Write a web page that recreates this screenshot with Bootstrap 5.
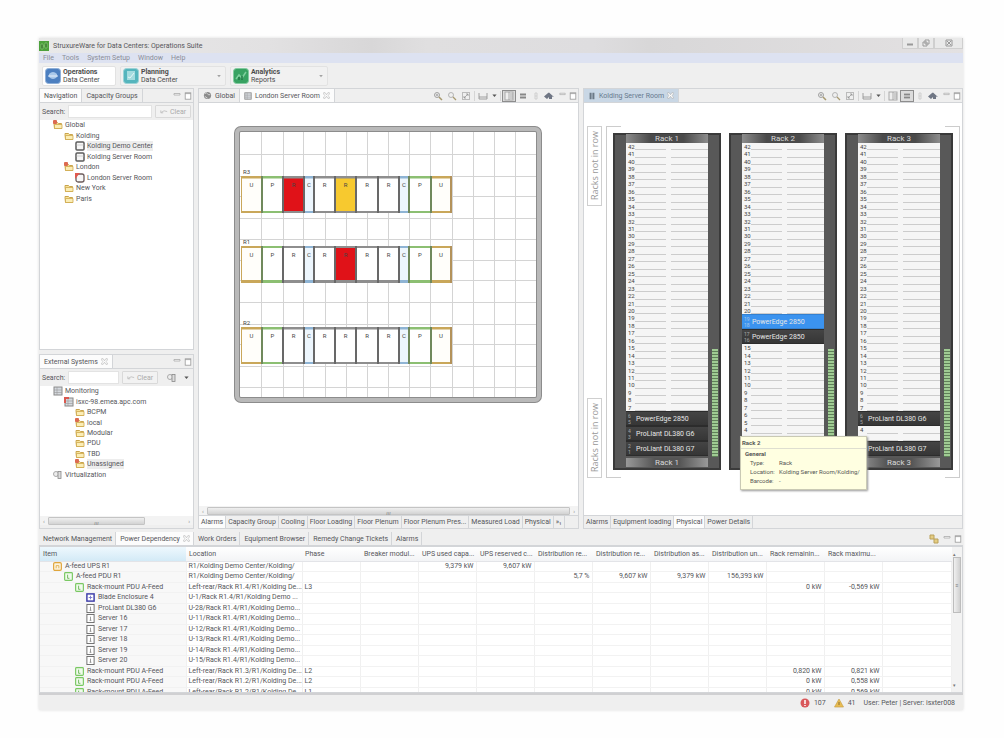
<!DOCTYPE html>
<html lang="en">
<head>
<meta charset="utf-8">
<meta name="viewport" content="width=device-width, initial-scale=1">
<title>StruxureWare for Data Centers: Operations Suite</title>
<link href="https://cdn.jsdelivr.net/npm/bootstrap@5.3.0/dist/css/bootstrap.min.css" rel="stylesheet">
<style>
  :root { --line: #d3d5d8; --chrome: #efefef; --ink: #55565a; }
  body { font: 7px/10px Roboto, "Open Sans", sans-serif; color: var(--ink); background: #fefefe; padding: 38px 41px 28px 39px; min-height: 100vh; }
  svg { display: block; flex: none; }
  button, input { font: inherit; color: inherit; }
  a { color: inherit; text-decoration: none; }
  .app-window { background: var(--chrome); box-shadow: 0 0 3px #ddd; }
  .ico { width: 10px; height: 10px; }
  .title-strip { height: 15px; background: linear-gradient(90deg, #e9e9e9, #e2e1e2 25%, #d8d7d8 36%, #e0dfe0 42%, #dedddf 60%, #d8d7d8 66%, #e3e1e2 100%); }
  .win-btn { border: 1px solid #cfcfcf; border-top: 0; background: #e9e9e9; height: 11px; width: 16px; padding: 0; display: grid; place-items: center; }
  .win-btn.wide { width: 29px; }
  .menu-strip { height: 10px; background: #dde2f1; color: #8a8d98; gap: 8px; padding-left: 4px; }
  .mode-strip { height: 25px; gap: 4px; padding: 2px 3px; }
  .mode-btn { height: 20px; border: 1px solid #e2e2e2; background: #f1f1f1; border-radius: 2px; padding: 0 3px 0 2px; line-height: 8px; text-align: left; gap: 2px; color: #4c4c4c; }
  .mode-btn.on { background: #fff; }
  .w-ops { width: 74px; } .w-plan { width: 106px; } .w-ana { width: 98px; }
  .bench { display: grid; grid-template-columns: minmax(0,155fr) minmax(0,381fr) minmax(0,380fr); gap: 4px; margin-bottom: 3px; }
  .pane { border: 1px solid var(--line); min-width: 0; }
  .tabs { height: 14px; background: var(--chrome); border-bottom: 1px solid var(--line); flex: none; white-space: nowrap; }
  .tab-btn { border: 0; border-right: 1px solid var(--line); background: transparent; height: 13px; padding: 0 4px; display: flex; align-items: center; gap: 3px; white-space: nowrap; }
  .tab-btn.on { background: #fcfcfc; }
  .tab-btn.focused { background: #c9d7e5; color: #66798e; }
  .dock .tab-btn { padding: 0 3px 0 4px; }
  .pane-tools { margin-left: auto; display: flex; align-items: center; padding-right: 1px; }
  .tool { border: 0; background: transparent; padding: 0; width: 14px; height: 12px; display: grid; place-items: center; color: #8e8e8e; }
  .tool.slim { width: 9px; }
  .tool.mid { width: 12px; }
  .tool.down { background: #dcdcdc; box-shadow: inset 0 0 0 1px #8d8d8d; }
  .rule { width: 1px; height: 10px; background: #d5d5d5; margin: 0 1px; }
  .find { height: 17px; padding: 2px 2px 2px 2px; gap: 3px; }
  .find input { border: 1px solid #e3e3e3; background: #fff; height: 13px; min-width: 0; flex: 1; padding: 0 2px; }
  .find .clear-btn { border: 1px solid #d9d9d9; background: #f2f2f2; color: #aaa; height: 13px; width: 36px; padding: 0; border-radius: 1px; gap: 2px; }
  .tree { display: grid; grid-auto-rows: 1fr; list-style: none; margin: 0; padding: 0 0 0 13px; }
  .tree.nav-tree { height: 84px; }
  .tree.ext-tree { height: 94px; margin-bottom: 36px; }
  .tree li { display: flex; align-items: center; gap: 2px; min-height: 0; white-space: nowrap; }
  .tree .d1 { padding-left: 11px; } .tree .d2 { padding-left: 22px; }
  .tree .chosen span { background: #ededed; }
  .bar { height: 9px; background: #f3f3f3; gap: 3px; padding: 0 3px; color: #888; flex: none; font-size: 6px; }
  .bar i { height: 8px; border: 1px solid #c4c4c4; background: linear-gradient(#efefef, #d3d3d3); border-radius: 1px; display: grid; place-items: center; }
  .ext-bar { margin-bottom: 3px; }
  .foot-tabs { height: 13px; border-top: 1px solid var(--line); background: var(--chrome); flex: none; overflow: hidden; }
  .foot-tabs .tab-btn { height: 12px; padding: 0 2px; }
  .floor-area { padding: 23px 0 0 35px; }
  .plan text { font-size: 6px; fill: #444; }
  .rack-area { padding: 23px 2px 37px 3px; }
  .vert { writing-mode: vertical-rl; transform: rotate(180deg); width: 15px; height: 80px; border: 1px solid #cfcfcf; font: 9px/13px "Open Sans", sans-serif; color: #999; text-align: center; white-space: nowrap; }
  .row-frame { border-left: 1px solid #ccc; border-right: 1px solid #ccc; padding: 7px 6px 8px; gap: 8px; background: linear-gradient(#ccc,#ccc) 0 0/14px 1px, linear-gradient(#ccc,#ccc) 100% 0/14px 1px, linear-gradient(#ccc,#ccc) 0 100%/14px 1px, linear-gradient(#ccc,#ccc) 100% 100%/14px 1px; background-repeat: no-repeat; }
  .rack { flex: 1; min-width: 0; display: grid; grid-template: 9px minmax(0,1fr) 13px / 13px minmax(0,1fr) 13px; background: #585858; box-shadow: inset 0 0 0 2px #3a3a3a; }
  .rack h2 { grid-column: 2; margin: 1px 0; font-size: 8px; line-height: 9px; height: 9px; font-weight: 400; text-align: center; color: #d8d8d8; background: linear-gradient(90deg, #8c8c8c, #4a4a4a 30%, #4a4a4a 70%, #8c8c8c); overflow: hidden; }
  .rack .foot { background: linear-gradient(90deg, #999, #555 35%, #555 65%, #999); }
  .bays { grid-column: 2; margin: 1px 0; display: grid; grid-template-rows: repeat(42, minmax(0,1fr)); background: #f5f5f5; }
  .slot { font-size: 6px; line-height: 7px; padding-left: 2px; color: #444; background: linear-gradient(#ccc,#ccc) 9px 100%/31px 1px no-repeat, linear-gradient(#ccc,#ccc) 100% 100%/37px 1px no-repeat; overflow: hidden; }
  .unit { grid-row: span 2; background: linear-gradient(#444, #363636); border: 1px solid #2c2c2c; border-width: 1px 0; color: #e6e6e6; display: flex; align-items: center; gap: 3px; white-space: nowrap; overflow: hidden; }
  .unit small { font-size: 5px; line-height: 6px; width: 7px; padding-left: 2px; opacity: .6; }
  .unit.sel { background: #3b93ef; border-color: #3380d0; }
  .meter { width: 6px; height: 108px; align-self: end; justify-self: center; background: repeating-linear-gradient(#9fcb93 0 2px, #5f7f58 2px 3px); }
  .tip { left: 156px; top: 333px; width: 127px; background: #ffffe1; border: 1px solid #c9c9b4; box-shadow: 1px 1px 2px #999; color: #555; font-size: 6px; line-height: 9px; }
  .tip header { border-bottom: 1px solid #deded0; padding: 0 1px; line-height: 11px; height: 12px; font-weight: 700; }
  .tip dl { display: grid; grid-template-columns: 29px 1fr; margin: 0; padding: 0 0 4px 9px; }
  .tip dt { font-weight: 400; } .tip dd { margin: 0; white-space: nowrap; }
  .sheet { table-layout: fixed; width: 100%; height: 151px; border-collapse: collapse; }
  .sheet th { height: 14px; font-weight: 400; background: linear-gradient(#fff, #f3f4f6); border-bottom: 1px solid #e3e4e8; padding: 0 4px; white-space: nowrap; overflow: hidden; }
  .sheet th:nth-child(-n+3) { padding-left: 3px; }
  .sheet th:first-child { background: linear-gradient(#eef8fd, #d3eaf6); }
  .sheet td { padding: 0 2px; border-right: 1px solid #f0f0f0; border-bottom: 1px solid #f2f2f2; line-height: 9px; white-space: nowrap; overflow: hidden; }
  .sheet td:first-child { background: #f8f8f8; }
  .sheet td:nth-child(n+4) { text-align: right; }
  .cell { display: flex; align-items: center; gap: 3px; height: 9px; padding-left: 11px; }
  .cell.l1 { padding-left: 22px; } .cell.l2 { padding-left: 33px; } .cell.l3 { padding-left: 44px; }
  .cell .ico { width: 9px; height: 9px; }
  .c-item { width: 146px; } .c-loc { width: 116px; } .c-num { width: 58px; }
  .sheet-box { height: 147px; overflow: hidden; background: #fff; border: 1px solid var(--line); }
  .vbar { width: 10px; background: #f3f3f3; font-size: 5px; color: #777; padding: 2px 1px; flex: none; }
  .vbar i { width: 8px; height: 56px; margin-top: -2px; border: 1px solid #bdbdbd; background: linear-gradient(90deg, #f0f0f0, #d0d0d0); display: grid; place-items: center; }
  .status { height: 17px; padding-right: 8px; gap: 4px; border-top: 2px solid #d0d0d2; }
</style>
</head>
<body class="d-flex flex-column">
<svg width="0" height="0" class="position-absolute" aria-hidden="true">
  <symbol id="folder" viewBox="0 0 10 10"><path d="M1 3.500V2.500h3.500l1 1H8.500V8.500H1.500z" fill="#f6e29a" stroke="#c9a44c"/><path d="M1.500 4.500h7.500v4H1.500z" fill="#fbedb5" stroke="#cfa94e" stroke-width=".8"/></symbol>
  <symbol id="folder-alert" viewBox="0 0 10 10"><use href="#folder"/><rect x="0" y="0" width="4" height="4" rx="1" fill="#dc6a50"/></symbol>
  <symbol id="room" viewBox="0 0 10 10"><rect x="1" y="1" width="8" height="8" rx="1" fill="#f6f6f6" stroke="#5c5c5c" stroke-width="1.500"/><path d="M1 4h8" stroke="#bbb" stroke-width=".6"/></symbol>
  <symbol id="room-alert" viewBox="0 0 10 10"><rect x="1" y="1" width="8" height="8" rx="2" fill="#f6f6f6" stroke="#6c5c5c" stroke-width="1.300"/><path d="M0 0h5L0 6z" fill="#e0584e"/></symbol>
  <symbol id="monitor" viewBox="0 0 10 10"><rect x="1" y="1" width="8" height="8" fill="#d5d9de" stroke="#888"/><path d="M1 4h8M1 6.500h8M4 1v8" stroke="#999" stroke-width=".6"/></symbol>
  <symbol id="monitor-alert" viewBox="0 0 10 10"><use href="#monitor"/><path d="M0 0h5v2H2v4H0z" fill="#d8594f"/></symbol>
  <symbol id="virtual" viewBox="0 0 10 10"><circle cx="3" cy="4" r="2.500" fill="#eee" stroke="#aaa"/><rect x="5" y="1.500" width="3" height="7" fill="#ddd" stroke="#888" stroke-width=".8"/></symbol>
  <symbol id="zin" viewBox="0 0 10 10"><circle cx="4" cy="4" r="2.500" fill="none" stroke="currentColor" stroke-width=".8"/><path d="m6 6 3 3" stroke="#a89a70" stroke-width="1.500"/><path d="M2.800 4h2.400M4 2.800v2.400" stroke="currentColor" stroke-width=".7"/></symbol>
  <symbol id="zout" viewBox="0 0 10 10"><circle cx="4" cy="4" r="2.500" fill="none" stroke="currentColor" stroke-width=".6"/><path d="m6 6 3 3" stroke="#a89a70" stroke-width="1.300"/></symbol>
  <symbol id="fit" viewBox="0 0 10 10"><rect x="1.500" y="1.500" width="7" height="7" fill="none" stroke="#bbb"/><path d="m3 7 4-4M5 3h2v2M3 5v2h2" fill="none" stroke="currentColor" stroke-width=".7"/></symbol>
  <symbol id="screen" viewBox="0 0 10 10"><path d="M1 2v6h8V2M1 6h8" fill="none" stroke="currentColor" stroke-width=".8"/></symbol>
  <symbol id="caret" viewBox="0 0 10 10"><path d="M2 3.500h6L5 7z" fill="#555"/></symbol>
  <symbol id="split" viewBox="0 0 10 10"><rect x="1" y="1" width="8" height="8" fill="#eee" stroke="#aaa"/><path d="M5 1v8M6 3h3M6 5h3M6 7h3" stroke="#999" stroke-width=".8"/></symbol>
  <symbol id="lines" viewBox="0 0 10 10"><rect x="2" y="2" width="6" height="6" fill="#bbb"/><path d="M2 3.500h6M2 6.500h6" stroke="#888"/></symbol>
  <symbol id="faint" viewBox="0 0 10 10"><path d="M4 2h2v6H4zM4 5h2" fill="none" stroke="#cfcfcf"/></symbol>
  <symbol id="home" viewBox="0 0 10 10"><path d="M0 5.500 4 2l1-.5L10 6 8 5.500V8H5V6L3 8z" fill="#6f7684"/></symbol>
  <symbol id="mini" viewBox="0 0 10 10"><path d="M2 2.500h6v1.500H2z" fill="#fff" stroke="#aaa" stroke-width=".8"/></symbol>
  <symbol id="maxi" viewBox="0 0 10 10"><rect x="1.500" y="1" width="7" height="8" fill="#fff" stroke="#999"/><path d="M1.500 2h7" stroke="#999"/></symbol>
  <symbol id="close" viewBox="0 0 10 10"><path d="M1 1h2l2 3 2-3h2v2L7 5l2 2v2H7L5 6 3 9H1V7l2-2-2-2z" fill="#fff" stroke="#aaa" stroke-width=".8"/></symbol>
  <symbol id="undo" viewBox="0 0 10 10"><path d="M1 3v3h3M1.500 5.500Q5 2 9 4.500" fill="none" stroke="#bbb"/></symbol>
  <symbol id="globe" viewBox="0 0 10 10"><circle cx="5" cy="5" r="4" fill="#8b8b8b"/><path d="M2 3q2-2 3 0t3 1M2 6l3 2" stroke="#ddd" fill="none"/></symbol>
  <symbol id="rackico" viewBox="0 0 10 10"><path d="M2 1h2.500v8H2zM5.500 1H8v8H5.500z" fill="#6c7986"/></symbol>
  <symbol id="link" viewBox="0 0 10 10"><path d="M1 1h4v4H1zM5 5h4v4H5z" fill="#e5cd82" stroke="#b9a05a"/></symbol>
  <symbol id="gold" viewBox="0 0 10 10"><rect x=".7" y=".7" width="8.600" height="8.600" rx="1.500" fill="#fdf3dc" stroke="#e0a63c" stroke-width="1.300"/><path d="M3.500 7V4h3v3" fill="none" stroke="#e0b050"/></symbol>
  <symbol id="green" viewBox="0 0 10 10"><rect x=".7" y=".7" width="8.600" height="8.600" rx="1" fill="#f0fbec" stroke="#7ac863" stroke-width="1.300"/><path d="M4 3v4h2" fill="none" stroke="#69b156"/></symbol>
  <symbol id="blade" viewBox="0 0 10 10"><rect x="1" y="1" width="8" height="8" fill="#fff" stroke="#3b3ba8" stroke-width="1.600"/><path d="M5 3v4M3 5h4" stroke="#7777cc"/></symbol>
  <symbol id="server" viewBox="0 0 10 10"><rect x="1" y=".5" width="8" height="9" fill="#fff" stroke="#666"/><path d="M5 3v4M4 7h2" stroke="#777" stroke-width=".8"/></symbol>
</svg>

<main class="app-window d-flex flex-column flex-grow-1">
  <header class="title-strip d-flex">
    <div class="d-flex align-items-center gap-1">
      <svg class="ico" viewBox="0 0 10 10"><rect width="10" height="10" fill="#4da13c"/><path d="M2 3h2v5H2zM6 2h2v5H6zM4 5h2" fill="#2a6a20" stroke="#9bd48a" stroke-width=".6"/></svg>
      <span>StruxureWare for Data Centers: Operations Suite</span>
    </div>
    <div class="d-flex ms-auto">
      <button class="win-btn" aria-label="Minimize"><svg width="8" height="8"><path d="M1 5.500h6" stroke="#999" stroke-width="2"/></svg></button>
      <button class="win-btn" aria-label="Restore"><svg width="8" height="8"><path d="M3 1h4v4H3zM1 3h4v4H1z" fill="#eee" stroke="#999"/></svg></button>
      <button class="win-btn wide" aria-label="Close window"><svg width="8" height="8"><path d="M1 1h6v6H1zM2 2l4 4M6 2 2 6" fill="none" stroke="#999"/></svg></button>
    </div>
  </header>
  <nav class="menu-strip d-flex align-items-center">
    <a href="#">File</a><a href="#">Tools</a><a href="#">System Setup</a><a href="#">Window</a><a href="#">Help</a>
  </nav>
  <div class="mode-strip d-flex align-items-center">
    <button class="mode-btn on w-ops d-flex align-items-center">
      <svg width="16" height="16" viewBox="0 0 16 16"><rect x=".5" y=".5" width="15" height="15" rx="3" fill="#4c7fc0" stroke="#8fb0d8"/><path d="M4 6q4-4 8 0v3q-4 4-8 0z" fill="#a9c8ea"/><path d="M3 8h10" stroke="#e5effa"/></svg>
      <span><b>Operations</b><br>Data Center</span></button>
    <button class="mode-btn w-plan d-flex align-items-center">
      <svg width="16" height="16" viewBox="0 0 16 16"><rect x=".5" y=".5" width="15" height="15" rx="3" fill="#55b5bd" stroke="#9bd3d6"/><rect x="4" y="3" width="8" height="9" fill="#a5dcdf"/><path d="m5 9 2 1 4-5" stroke="#e6f7f7" fill="none"/></svg>
      <span><b>Planning</b><br>Data Center</span><svg class="ms-auto" width="6" height="6"><use href="#caret" opacity=".5"/></svg></button>
    <button class="mode-btn w-ana d-flex align-items-center">
      <svg width="16" height="16" viewBox="0 0 16 16"><rect x=".5" y=".5" width="15" height="15" rx="3" fill="#38a262" stroke="#83cba0"/><path d="m3 11 3-4 3 3 4-6" fill="none" stroke="#7fcf9d" stroke-width="1.500"/><path d="M6 12V9M9 12V8" stroke="#217a45" stroke-width="1.500"/></svg>
      <span><b>Analytics</b><br>Reports</span><svg class="ms-auto" width="6" height="6"><use href="#caret" opacity=".5"/></svg></button>
  </div>

  <div class="bench flex-grow-1">
    <div class="d-flex flex-column gap-1">
      <section class="pane d-flex flex-column flex-grow-1">
        <div class="tabs d-flex">
          <button class="tab-btn on">Navigation</button><button class="tab-btn">Capacity Groups</button>
          <div class="pane-tools"><button class="tool mid" aria-label="Minimize"><svg class="ico"><use href="#mini"/></svg></button><button class="tool slim" aria-label="Maximize"><svg width="8" height="8"><use href="#maxi"/></svg></button></div>
        </div>
        <div class="find d-flex align-items-center">
          <label for="find-nav">Search:</label><input id="find-nav" type="text">
          <button class="clear-btn d-flex align-items-center justify-content-center"><svg width="8" height="8"><use href="#undo"/></svg>Clear</button>
        </div>
        <div class="bg-white flex-grow-1">
          <ul class="tree nav-tree">
            <li><svg class="ico"><use href="#folder-alert"/></svg><span>Global</span></li>
            <li class="d1"><svg class="ico"><use href="#folder"/></svg><span>Kolding</span></li>
            <li class="d2 chosen"><svg class="ico"><use href="#room"/></svg><span>Kolding Demo Center</span></li>
            <li class="d2"><svg class="ico"><use href="#room"/></svg><span>Kolding Server Room</span></li>
            <li class="d1"><svg class="ico"><use href="#folder-alert"/></svg><span>London</span></li>
            <li class="d2"><svg class="ico"><use href="#room-alert"/></svg><span>London Server Room</span></li>
            <li class="d1"><svg class="ico"><use href="#folder"/></svg><span>New York</span></li>
            <li class="d1"><svg class="ico"><use href="#folder"/></svg><span>Paris</span></li>
          </ul>
        </div>
      </section>
      <section class="pane d-flex flex-column">
        <div class="tabs d-flex">
          <button class="tab-btn on">External Systems <svg width="7" height="7"><use href="#close"/></svg></button>
          <div class="pane-tools"><button class="tool mid" aria-label="Minimize"><svg class="ico"><use href="#mini"/></svg></button><button class="tool slim" aria-label="Maximize"><svg width="8" height="8"><use href="#maxi"/></svg></button></div>
        </div>
        <div class="find d-flex align-items-center">
          <label for="find-ext">Search:</label><input id="find-ext" type="text">
          <button class="clear-btn d-flex align-items-center justify-content-center"><svg width="8" height="8"><use href="#undo"/></svg>Clear</button>
          <button class="tool ms-1" aria-label="View options"><svg class="ico"><use href="#virtual"/></svg></button><button class="tool slim" aria-label="Menu"><svg width="7" height="7"><use href="#caret"/></svg></button>
        </div>
        <div class="bg-white d-flex flex-column">
          <ul class="tree ext-tree">
            <li><svg class="ico"><use href="#monitor"/></svg><span>Monitoring</span></li>
            <li class="d1"><svg class="ico"><use href="#monitor-alert"/></svg><span>isxc-98.emea.apc.com</span></li>
            <li class="d2"><svg class="ico"><use href="#folder"/></svg><span>BCPM</span></li>
            <li class="d2"><svg class="ico"><use href="#folder-alert"/></svg><span>local</span></li>
            <li class="d2"><svg class="ico"><use href="#folder"/></svg><span>Modular</span></li>
            <li class="d2"><svg class="ico"><use href="#folder"/></svg><span>PDU</span></li>
            <li class="d2"><svg class="ico"><use href="#folder"/></svg><span>TBD</span></li>
            <li class="d2 chosen"><svg class="ico"><use href="#folder-alert"/></svg><span>Unassigned</span></li>
            <li><svg class="ico"><use href="#virtual"/></svg><span>Virtualization</span></li>
          </ul>
        </div>
        <div class="bar ext-bar d-flex align-items-center"><span>‹</span><i class="flex-grow-1">ııı</i><span class="ps-4 ms-3">›</span></div>
      </section>
    </div>

    <section class="pane bg-white d-flex flex-column">
      <div class="tabs d-flex">
        <button class="tab-btn"><svg width="9" height="9"><use href="#globe"/></svg>Global</button>
        <button class="tab-btn on"><svg width="8" height="8"><use href="#monitor"/></svg>London Server Room <svg width="7" height="7"><use href="#close"/></svg></button>
        <div class="pane-tools" data-tools="split"></div>
      </div>
      <div class="floor-area flex-grow-1">
        <svg id="floor" class="plan" width="308" height="277" viewBox="0 0 308 277" role="img" aria-label="London Server Room floor plan"></svg>
      </div>
      <div class="bar d-flex align-items-center"><span>‹</span><i class="flex-grow-1">ııı</i><span>›</span></div>
      <div class="foot-tabs d-flex">
        <button class="tab-btn on">Alarms</button><button class="tab-btn">Capacity Group</button><button class="tab-btn">Cooling</button><button class="tab-btn">Floor Loading</button><button class="tab-btn">Floor Plenum</button><button class="tab-btn">Floor Plenum Pres...</button><button class="tab-btn">Measured Load</button><button class="tab-btn">Physical</button><button class="tab-btn" aria-label="More views">»₁</button>
      </div>
    </section>

    <section class="pane bg-white d-flex flex-column">
      <div class="tabs d-flex">
        <button class="tab-btn focused"><svg width="8" height="8"><use href="#rackico"/></svg>Kolding Server Room <svg width="7" height="7"><use href="#close"/></svg></button>
        <div class="pane-tools" data-tools="lines"></div>
      </div>
      <div class="rack-area position-relative d-flex flex-grow-1 gap-1">
        <div class="d-flex flex-column justify-content-between"><div class="vert">Racks not in row</div><div class="vert">Racks not in row</div></div>
        <div class="row-frame d-flex flex-grow-1" id="racks"></div>
        <aside class="tip position-absolute">
          <header>Rack 2</header>
          <div class="fw-bold px-1">General</div>
          <dl><dt>Type:</dt><dd>Rack</dd><dt>Location:</dt><dd>Kolding Server Room/Kolding/</dd><dt>Barcode:</dt><dd>-</dd></dl>
        </aside>
      </div>
      <div class="foot-tabs d-flex">
        <button class="tab-btn">Alarms</button><button class="tab-btn">Equipment loading</button><button class="tab-btn on">Physical</button><button class="tab-btn">Power Details</button>
      </div>
    </section>
  </div>

  <section class="dock">
    <div class="tabs d-flex">
      <button class="tab-btn">Network Management</button><button class="tab-btn on">Power Dependency <svg width="7" height="7"><use href="#close"/></svg></button><button class="tab-btn">Work Orders</button><button class="tab-btn">Equipment Browser</button><button class="tab-btn">Remedy Change Tickets</button><button class="tab-btn">Alarms</button>
      <div class="pane-tools"><button class="tool" aria-label="Link with editor"><svg class="ico"><use href="#link"/></svg></button><button class="tool mid" aria-label="Minimize"><svg class="ico"><use href="#mini"/></svg></button><button class="tool slim" aria-label="Maximize"><svg width="8" height="8"><use href="#maxi"/></svg></button></div>
    </div>
    <div class="sheet-box d-flex">
      <div class="flex-grow-1">
        <table class="sheet">
          <colgroup><col class="c-item"><col class="c-loc"><col class="c-num"><col class="c-num"><col class="c-num"><col class="c-num"><col class="c-num"><col class="c-num"><col class="c-num"><col class="c-num"><col class="c-num"><col class="c-num"><col></colgroup>
          <thead><tr><th>Item</th><th>Location</th><th>Phase</th><th>Breaker modul...</th><th>UPS used capa...</th><th>UPS reserved c...</th><th>Distribution re...</th><th>Distribution re...</th><th>Distribution as...</th><th>Distribution un...</th><th>Rack remainin...</th><th>Rack maximu...</th><th></th></tr></thead>
          <tbody id="rows"></tbody>
        </table>
      </div>
      <div class="vbar d-flex flex-column justify-content-between"><span>▴</span><i class="mb-auto">≡</i><span>▾</span></div>
    </div>
  </section>
  <footer class="status d-flex align-items-center justify-content-end">
    <svg class="ico" viewBox="0 0 10 10"><circle cx="5" cy="5" r="4.500" fill="#d9585b"/><path d="M5 2v4M5 7v1" stroke="#fff" stroke-width="1.500"/></svg><span class="me-1">107</span>
    <svg class="ico" viewBox="0 0 10 10"><path d="M5 1 9.500 9H.5z" fill="#e9bc50" stroke="#c9a24a" stroke-width=".7"/><path d="M5 4v3" stroke="#8b6e32"/></svg><span class="me-1">41</span>
    <span>User: Peter | Server: isxter008</span>
  </footer>
</main>

<script src="https://cdn.jsdelivr.net/npm/bootstrap@5.3.0/dist/js/bootstrap.bundle.min.js"></script>
<script>
  // Editor toolbars: both panes share the buttons, each has its own active view.
  document.querySelectorAll('[data-tools]').forEach(box => {
    const b = (id, label, cls = '', s = 10) => `<button class="tool ${cls}" aria-label="${label}"><svg width="${s}" height="${s}"><use href="#${id}"/></svg></button>`;
    const down = v => box.dataset.tools === v ? 'down' : '';
    box.innerHTML = b('zin', 'Zoom in') + b('zout', 'Zoom out') + b('fit', 'Zoom to fit') + '<span class="rule"></span>' +
      b('screen', 'Display') + b('caret', 'Display menu', 'slim', 7) + '<span class="rule"></span>' +
      b('split', 'Floor view', down('split')) + b('lines', 'Row view', down('lines')) +
      b('faint', 'Rack view', 'mid') + b('home', 'Home') + b('mini', 'Minimize', 'mid', 9) + b('maxi', 'Maximize', 'slim', 8);
  });

  // Floor plan: walls, tile grid, then three rows of equipment.
  const xs = [6,27,49,69,91,112,133,154,175,196,218,239,260,281,302], ys = [28,50,70,92,113,134,154,176,198,218,240,261];
  const tone = { U: '#c9a75a', P: '#8cbf72', R: '#8e8e8e', C: '#8fb4d4' };
  const fills = { U: '#fffefa', P: '#fff', R: '#fff', C: '#edf6fd' };
  let g = '<rect x="3" y="3" width="302" height="271" rx="4" fill="#fff" stroke="#8c8c8c" stroke-width="6"/><rect x="3" y="3" width="302" height="271" rx="4" fill="none" stroke="#b9b9b9" stroke-width="4"/>';
  xs.slice(1, -1).forEach(x => g += `<path d="M${x + .5} 6v265" stroke="#d4d4d4"/>`);
  ys.forEach(y => g += `<path d="M6 ${y + .5}h296" stroke="#d4d4d4"/>`);
  const kinds = 'UPRCRRRRCPU', lefts = [7,28,49,70,80,101,122,144,165,175,197,217];
  [['R3', 50, { 2: '#e01218', 5: '#f7c92f' }], ['R1', 120, { 5: '#e01218' }], ['R2', 201, {}]].forEach(([name, y, hot], n) => {
    g += `<text x="9" y="${y - 2}">${name}</text>`;
    [...kinds].forEach((k, i) => {
      const x = lefts[i], w = lefts[i + 1] - x;
      g += `<rect x="${x + .5}" y="${y + .5}" width="${w - 1}" height="36" fill="${hot[i] || fills[k]}" stroke="${tone[k]}"/>`;
      g += `<path d="M${x} ${n === 1 ? y + 35 : y + 1.500}h${w}M${x} ${n === 1 ? y + 1 : y + 36}h${w}" stroke="${tone[k]}" stroke-width="2"/>`;
      if (i) g += `<path d="M${x} ${y}v37" stroke="${k === 'P' || k === 'U' ? '#70895c' : '#686868'}" stroke-width="2"/>`;
      g += `<text x="${x + w / 2}" y="${y + 11}" text-anchor="middle">${k}</text>`;
    });
    g += `<path d="M217 ${y}v37" stroke="#b3925a" stroke-width="2"/>`;
  });
  document.getElementById('floor').innerHTML = g;

  // Racks: 42 positions from the top down; a device takes two.
  const racks = [
    { 6: ['PowerEdge 2850'], 4: ['ProLiant DL380 G6'], 2: ['ProLiant DL380 G7'] },
    { 19: ['PowerEdge 2850', 'sel'], 17: ['PowerEdge 2850'] },
    { 6: ['ProLiant DL380 G6'], 2: ['ProLiant DL380 G7'] }
  ];
  document.getElementById('racks').innerHTML = racks.map((dev, r) => {
    let s = '';
    for (let u = 42; u > 0; u--) {
      if (dev[u]) { s += `<div class="unit ${dev[u][1] || ''}"><small>${u}<br>${u - 1}</small>${dev[u][0]}</div>`; u--; }
      else s += `<div class="slot">${u}</div>`;
    }
    return `<div class="rack"><h2>Rack ${r + 1}</h2><div class="bays">${s}</div><div class="meter"></div><h2 class="foot">Rack ${r + 1}</h2></div>`;
  }).join('');

  // Power dependency rows: level, icon, name, location, phase, {column: value}.
  const data = [
    [0, 'gold', 'A-feed UPS R1', 'R1/Kolding Demo Center/Kolding/', '', { 4: '9,379 kW', 5: '9,607 kW' }],
    [1, 'green', 'A-feed PDU R1', 'R1/Kolding Demo Center/Kolding/', '', { 6: '5,7 %', 7: '9,607 kW', 8: '9,379 kW', 9: '156,393 kW' }],
    [2, 'green', 'Rack-mount PDU A-Feed', 'Left-rear/Rack R1.4/R1/Kolding De...', 'L3', { 10: '0 kW', 11: '-0,569 kW' }],
    [3, 'blade', 'Blade Enclosure 4', 'U-1/Rack R1.4/R1/Kolding Demo ...', '', {}],
    [3, 'server', 'ProLiant DL380 G6', 'U-28/Rack R1.4/R1/Kolding Demo...', '', {}],
    [3, 'server', 'Server 16', 'U-11/Rack R1.4/R1/Kolding Demo...', '', {}],
    [3, 'server', 'Server 17', 'U-12/Rack R1.4/R1/Kolding Demo...', '', {}],
    [3, 'server', 'Server 18', 'U-13/Rack R1.4/R1/Kolding Demo...', '', {}],
    [3, 'server', 'Server 19', 'U-14/Rack R1.4/R1/Kolding Demo...', '', {}],
    [3, 'server', 'Server 20', 'U-15/Rack R1.4/R1/Kolding Demo...', '', {}],
    [2, 'green', 'Rack-mount PDU A-Feed', 'Left-rear/Rack R1.3/R1/Kolding De...', 'L2', { 10: '0,820 kW', 11: '0,821 kW' }],
    [2, 'green', 'Rack-mount PDU A-Feed', 'Left-rear/Rack R1.2/R1/Kolding De...', 'L2', { 10: '0 kW', 11: '0,558 kW' }],
    [2, 'green', 'Rack-mount PDU A-Feed', 'Left-rear/Rack R1.2/R1/Kolding De...', 'L1', { 10: '0 kW', 11: '0,569 kW' }]
  ];
  document.getElementById('rows').innerHTML = data.map(([lv, ic, name, loc, ph, v]) => {
    let s = `<tr><td><div class="cell l${lv}"><svg class="ico"><use href="#${ic}"/></svg>${name}</div></td><td>${loc}</td><td>${ph}</td>`;
    for (let c = 3; c < 13; c++) s += `<td>${v[c] || ''}</td>`;
    return s + '</tr>';
  }).join('');
</script>
</body>
</html>
